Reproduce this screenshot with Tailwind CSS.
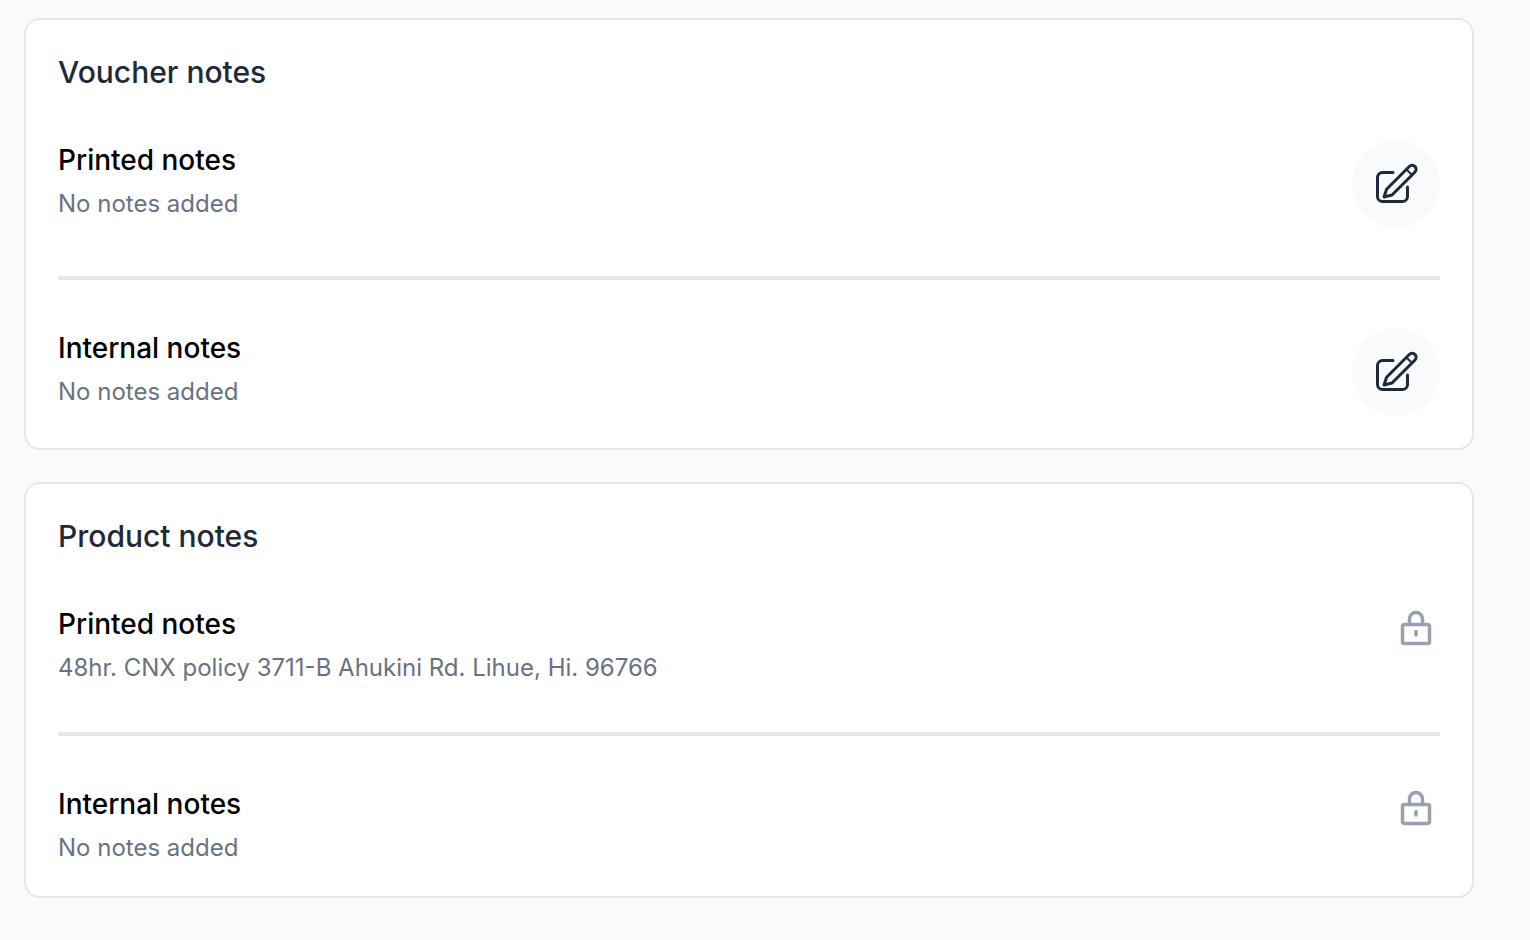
<!DOCTYPE html>
<html lang="en">
<head>
    <meta charset="UTF-8">
    <title>Notes</title>
    <script src="https://cdn.jsdelivr.net/npm/@tailwindcss/browser@4"></script>
</head>
<body class="bg-[#f9fafb] font-['Inter',sans-serif] overflow-hidden">
    <div class="w-[1530px] h-[940px] pt-[18px] pl-6 flex flex-col gap-8">
        <!-- Voucher notes -->
        <section class="w-[1450px] bg-white border-2 border-gray-200 rounded-2xl p-8">
            <h2 class="text-[30px] leading-10 font-medium text-gray-800 mb-12">Voucher notes</h2>
            <div class="flex justify-between">
                <div>
                    <h3 class="text-[28px] leading-10 font-medium text-black">Printed notes</h3>
                    <p class="text-2xl leading-10 text-gray-500 mt-1">No notes added</p>
                </div>
                <button class="w-[88px] h-[88px] rounded-full bg-gray-50 flex items-center justify-center text-gray-800">
                    <svg class="w-12 h-12" fill="none" viewBox="0 0 48 48" stroke="currentColor" stroke-width="3" stroke-linecap="round" stroke-linejoin="round">
                        <path d="M21 12.5H10.5a5 5 0 0 0-5 5v19a5 5 0 0 0 5 5h20a5 5 0 0 0 5-5V27" />
                        <path d="M37.3 6.5a3.9 3.9 0 0 1 5.7 5.5L20 35l-8 2 2.6-7.8L37.3 6.5z" />
                        <path d="M35 10l5 5" stroke-width="2" />
                    </svg>
                </button>
            </div>
            <div class="h-1 bg-gray-200 my-12"></div>
            <div class="flex justify-between">
                <div>
                    <h3 class="text-[28px] leading-10 font-medium text-black">Internal notes</h3>
                    <p class="text-2xl leading-10 text-gray-500 mt-1">No notes added</p>
                </div>
                <button class="w-[88px] h-[88px] rounded-full bg-gray-50 flex items-center justify-center text-gray-800">
                    <svg class="w-12 h-12" fill="none" viewBox="0 0 48 48" stroke="currentColor" stroke-width="3" stroke-linecap="round" stroke-linejoin="round">
                        <path d="M21 12.5H10.5a5 5 0 0 0-5 5v19a5 5 0 0 0 5 5h20a5 5 0 0 0 5-5V27" />
                        <path d="M37.3 6.5a3.9 3.9 0 0 1 5.7 5.5L20 35l-8 2 2.6-7.8L37.3 6.5z" />
                        <path d="M35 10l5 5" stroke-width="2" />
                    </svg>
                </button>
            </div>
        </section>

        <!-- Product notes -->
        <section class="w-[1450px] bg-white border-2 border-gray-200 rounded-2xl p-8">
            <h2 class="text-[30px] leading-10 font-medium text-gray-800 mb-12">Product notes</h2>
            <div class="flex justify-between h-20">
                <div>
                    <h3 class="text-[28px] leading-10 font-medium text-black">Printed notes</h3>
                    <p class="text-2xl leading-10 text-gray-500 mt-1">48hr. CNX policy 3711-B Ahukini Rd. Lihue, Hi. 96766</p>
                </div>
                <svg class="w-10 h-10 mt-1 mr-1 text-gray-400" fill="none" viewBox="0 0 20 20" stroke="currentColor" stroke-width="1.75" stroke-linecap="round" stroke-linejoin="round">
                    <path d="M6.75 8.25V5.5a3.25 3.25 0 0 1 6.5 0v2.75" />
                    <rect x="3.25" y="8.25" width="13.5" height="9.5" rx="1" />
                    <path d="M10 11.75v1.75" />
                </svg>
            </div>
            <div class="h-1 bg-gray-200 my-12"></div>
            <div class="flex justify-between h-20">
                <div>
                    <h3 class="text-[28px] leading-10 font-medium text-black">Internal notes</h3>
                    <p class="text-2xl leading-10 text-gray-500 mt-1">No notes added</p>
                </div>
                <svg class="w-10 h-10 mt-1 mr-1 text-gray-400" fill="none" viewBox="0 0 20 20" stroke="currentColor" stroke-width="1.75" stroke-linecap="round" stroke-linejoin="round">
                    <path d="M6.75 8.25V5.5a3.25 3.25 0 0 1 6.5 0v2.75" />
                    <rect x="3.25" y="8.25" width="13.5" height="9.5" rx="1" />
                    <path d="M10 11.75v1.75" />
                </svg>
            </div>
        </section>
    </div>
</body>
</html>
